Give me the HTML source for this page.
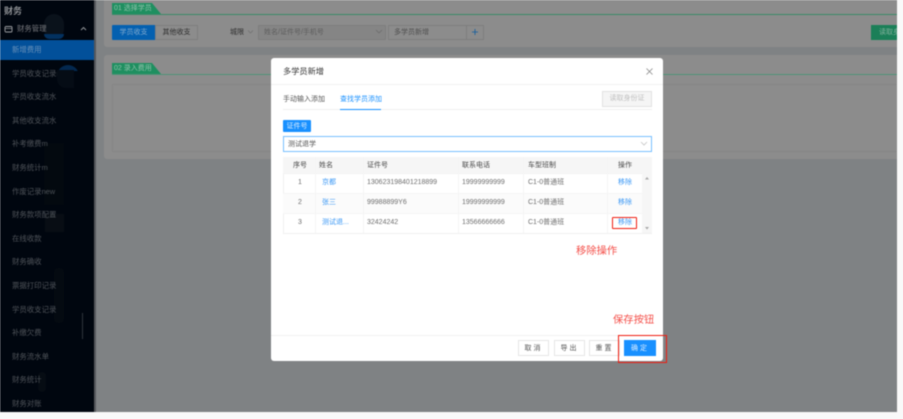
<!DOCTYPE html>
<html lang="zh">
<head>
<meta charset="utf-8">
<style>
*{box-sizing:border-box;margin:0;padding:0}
html,body{width:903px;height:419px;overflow:hidden;background:#f9f9f9}
body{font-family:"Liberation Sans","Noto Sans CJK SC",sans-serif;position:relative}
#wrap{position:absolute;left:0;top:0;width:903px;height:419px;filter:blur(.5px)}
.a{position:absolute;white-space:nowrap}
#page{position:absolute;left:0;top:0;width:897px;height:412px;background:#7f8284;overflow:hidden}
#side{position:absolute;left:0;top:0;width:94px;height:412px;background:#00060f}
.mi{position:absolute;left:12px;font-size:7.4px;line-height:12px;color:#4e5359;white-space:nowrap;width:45px;overflow:hidden}
.card{position:absolute;left:104px;width:800px;background:#8c8c8c;border-radius:3px}
.tabg{position:absolute;height:11px;width:49px;background:#1f8f60;clip-path:polygon(0 0,40px 0,49px 100%,0 100%);color:#8fc0aa;font-size:7px;line-height:11px;padding-left:2px;white-space:nowrap}
.line{position:absolute;height:1px;background:#3a8a68}
#modal{position:absolute;left:271px;top:58px;width:392px;height:303px;background:#fff;border-radius:3px}
.cell{position:absolute;font-size:7px;line-height:12px;color:#6e6e6e;white-space:nowrap}
.hd{color:#4a4a4a}
.lk{color:#3b98f5}
.b{position:absolute;top:340px;height:16px;width:31px;background:#fff;border:1px solid #e6e6e6;font-size:7px;line-height:16px;text-align:center;color:#555;letter-spacing:2px}
</style>
</head>
<body>
<div id="wrap">
<div id="page">
  <div class="card" style="top:-4px;height:51px"></div>
  <div class="card" style="top:55px;height:104px"></div>

  <div class="tabg" style="left:112px;top:3px">01 选择学员</div>
  <div class="line" style="left:112px;top:14px;width:785px"></div>
  <div class="a" style="left:112px;top:25px;width:43px;height:15px;background:#0460b0;color:#7fa9cf;font-size:7px;line-height:16px;text-align:center;border-radius:1px 0 0 1px">学员收支</div>
  <div class="a" style="left:155px;top:25px;width:43px;height:15px;background:#8c8c8c;border:1px solid #7e7e7e;color:#2e2e2e;font-size:7px;line-height:14px;text-align:center">其他收支</div>
  <div class="a" style="left:230px;top:27px;font-size:7px;line-height:12px;color:#2f2f2f">城限</div>
  <svg class="a" style="left:247px;top:29px" width="7" height="6"><path d="M1 1.5L3.5 4L6 1.5" fill="none" stroke="#6f6f6f" stroke-width=".7"/></svg>
  <div class="a" style="left:258px;top:25px;width:128px;height:15px;border:1px solid #7e7e7e;background:#858585;color:#5d5d5d;font-size:7px;line-height:14px;padding-left:5px">姓名/证件号/手机号</div>
  <svg class="a" style="left:375px;top:29px" width="8" height="6"><path d="M1 1L4 4L7 1" fill="none" stroke="#6a6a6a" stroke-width=".7"/></svg>
  <div class="a" style="left:388px;top:25px;width:79px;height:15px;border:1px solid #7e7e7e;color:#4f4f4f;font-size:7px;line-height:14px;padding-left:5px">多学员新增</div>
  <div class="a" style="left:466px;top:25px;width:18px;height:15px;border:1px solid #7e7e7e"></div>
  <svg class="a" style="left:471px;top:28px" width="8" height="8"><path d="M4 1V7M1 4H7" fill="none" stroke="#0f5c9e" stroke-width=".8"/></svg>
  <div class="a" style="left:871px;top:25px;width:26px;height:15px;background:#1b7f58;color:#80b09b;font-size:7px;line-height:16px;padding-left:8px;overflow:hidden">读取身份证</div>

  <div class="tabg" style="left:112px;top:63px">02 录入费用</div>
  <div class="line" style="left:112px;top:74px;width:785px;background:#4f9377"></div>
  <div class="a" style="left:112px;top:84px;width:790px;height:68px;border:1px solid #868686"></div>

  <div id="side">
    <div class="a" style="left:44px;top:14px;width:20px;height:25px;background:#0a121b;border-radius:10px"></div>
    <div class="a" style="left:44px;top:34px;width:20px;height:5px;background:#03315f;border-radius:0 0 10px 10px"></div>
    <div class="a" style="left:57px;top:65px;width:22px;height:22px;background:#03284f;border-radius:11px 11px 0 0;clip-path:inset(0 0 16px 0)"></div>
    <div class="a" style="left:57px;top:70px;width:17px;height:18px;background:#050c15;border-radius:0 0 0 9px"></div>
    <div class="a" style="left:44px;top:143px;width:20px;height:62px;background:#03090f"></div>
    <div class="a" style="left:45px;top:214px;width:19px;height:18px;background:#080d14"></div>
    <div class="a" style="left:54px;top:268px;width:10px;height:55px;background:#040a11;border-radius:4px"></div>
    <div class="a" style="left:82px;top:313px;width:1px;height:26px;background:#2e343b"></div>
    <div class="a" style="left:38px;top:372px;width:8px;height:20px;background:#060c13;border-radius:4px"></div>

    <div class="a" style="left:4px;top:3px;font-size:9px;line-height:16px;color:#8d9094;font-weight:700">财务</div>
    <svg class="a" style="left:4px;top:25px" width="9" height="8"><rect x="1" y="1.5" width="7" height="5.5" rx="1" fill="none" stroke="#9a9da0" stroke-width=".9"/><path d="M1 3.5H8" stroke="#9a9da0" stroke-width=".7"/></svg>
    <div class="a" style="left:17px;top:24px;font-size:7.4px;line-height:10px;color:#76787d">财务管理</div>
    <svg class="a" style="left:80px;top:26px" width="7" height="5"><path d="M1 4L3.5 1.5L6 4" fill="none" stroke="#9a9da0" stroke-width=".9"/></svg>
    <div class="a" style="left:0;top:40px;width:94px;height:20px;background:#02509a"></div>
    <div class="mi" style="top:44px;color:#6a92ba">新增费用</div>
    <div class="mi" style="top:68px">学员收支记录m</div>
    <div class="mi" style="top:91px">学员收支流水</div>
    <div class="mi" style="top:115px">其他收支流水</div>
    <div class="mi" style="top:138px">补考缴费m</div>
    <div class="mi" style="top:162px">财务统计m</div>
    <div class="mi" style="top:186px">作废记录new</div>
    <div class="mi" style="top:209px">财务款项配置</div>
    <div class="mi" style="top:233px">在线收款</div>
    <div class="mi" style="top:256px">财务确收</div>
    <div class="mi" style="top:280px">票据打印记录</div>
    <div class="mi" style="top:304px">学员收支记录</div>
    <div class="mi" style="top:327px">补缴欠费</div>
    <div class="mi" style="top:351px">财务流水单</div>
    <div class="mi" style="top:374px">财务统计</div>
    <div class="mi" style="top:398px">财务对账</div>
  </div>
  <div class="a" style="left:94px;top:0;width:2px;height:412px;background:#55585b"></div>

  <div id="modal"></div>
  <div class="a" style="left:283px;top:65px;font-size:8.2px;line-height:14px;color:#333">多学员新增</div>
  <svg class="a" style="left:645px;top:67px" width="9" height="9"><path d="M1.5 1.5L7.5 7.5M7.5 1.5L1.5 7.5" fill="none" stroke="#888" stroke-width=".8"/></svg>
  <div class="a" style="left:271px;top:84px;width:392px;height:1px;background:#f1f1f1"></div>

  <div class="a" style="left:283px;top:94px;font-size:7px;line-height:12px;color:#555">手动输入添加</div>
  <div class="a" style="left:340px;top:94px;font-size:7px;line-height:12px;color:#1890ff">查找学员添加</div>
  <div class="a" style="left:283px;top:109px;width:369px;height:1px;background:#f0f0f0"></div>
  <div class="a" style="left:340px;top:108.5px;width:41px;height:1.5px;background:#1890ff"></div>
  <div class="a" style="left:602px;top:91px;width:50px;height:16px;background:#f5f5f5;border:1px solid #e2e2e2;font-size:7px;line-height:14px;text-align:center;color:#c0c0c0">读取身份证</div>

  <div class="a" style="left:283px;top:120px;width:28px;height:12px;background:#1890ff;border-radius:1px;font-size:7px;line-height:14px;text-align:center;color:#d9ecff">证件号</div>
  <div class="a" style="left:283px;top:136px;width:369px;height:16px;border:1px solid #78bfff;background:#fff;font-size:7px;line-height:15px;color:#555;padding-left:4px">测试退学</div>
  <svg class="a" style="left:640px;top:141px" width="8" height="6"><path d="M1 1L4 4L7 1" fill="none" stroke="#c4c4c4" stroke-width=".8"/></svg>

  <!-- table -->
  <div class="a" style="left:283px;top:157px;width:369px;height:77px;background:#fff;border:1px solid #f0f0f0"></div>
  <div class="a" style="left:283px;top:157px;width:369px;height:16px;background:#f6f6f6"></div>
  <div class="a" style="left:283px;top:193px;width:359px;height:20px;background:#fbfbfb"></div>
  <div class="a" style="left:283px;top:173px;width:369px;height:1px;background:#f2f2f2"></div>
  <div class="a" style="left:283px;top:193px;width:359px;height:1px;background:#f5f5f5"></div>
  <div class="a" style="left:283px;top:213px;width:359px;height:1px;background:#f5f5f5"></div>
  <div class="a" style="left:315px;top:157px;width:1px;height:76px;background:#f5f5f5"></div>
  <div class="a" style="left:363px;top:157px;width:1px;height:76px;background:#f5f5f5"></div>
  <div class="a" style="left:458px;top:157px;width:1px;height:76px;background:#f5f5f5"></div>
  <div class="a" style="left:523px;top:157px;width:1px;height:76px;background:#f5f5f5"></div>
  <div class="a" style="left:607px;top:157px;width:1px;height:76px;background:#f5f5f5"></div>
  <div class="a" style="left:642px;top:173px;width:10px;height:60px;background:#f6f6f6"></div>
  <svg class="a" style="left:644px;top:176px" width="6" height="54"><path d="M1 3.5L3 1L5 3.5Z" fill="#a8a8a8"/><path d="M1 51L3 53.5L5 51Z" fill="#a8a8a8"/></svg>

  <div class="cell hd" style="left:293px;top:160px">序号</div>
  <div class="cell hd" style="left:319px;top:160px">姓名</div>
  <div class="cell hd" style="left:367px;top:160px">证件号</div>
  <div class="cell hd" style="left:462px;top:160px">联系电话</div>
  <div class="cell hd" style="left:528px;top:160px">车型班制</div>
  <div class="cell hd" style="left:618px;top:160px">操作</div>

  <div class="cell" style="left:298px;top:177px">1</div>
  <div class="cell lk" style="left:322px;top:177px">京都</div>
  <div class="cell" style="left:367px;top:177px">130623198401218899</div>
  <div class="cell" style="left:462px;top:177px">19999999999</div>
  <div class="cell" style="left:528px;top:177px">C1-0普通班</div>
  <div class="cell lk" style="left:618px;top:177px">移除</div>

  <div class="cell" style="left:298px;top:197px">2</div>
  <div class="cell lk" style="left:322px;top:197px">张三</div>
  <div class="cell" style="left:367px;top:197px">99988899Y6</div>
  <div class="cell" style="left:462px;top:197px">19999999999</div>
  <div class="cell" style="left:528px;top:197px">C1-0普通班</div>
  <div class="cell lk" style="left:618px;top:197px">移除</div>

  <div class="cell" style="left:298px;top:217px">3</div>
  <div class="cell lk" style="left:322px;top:217px">测试退...</div>
  <div class="cell" style="left:367px;top:217px">32424242</div>
  <div class="cell" style="left:462px;top:217px">13566666666</div>
  <div class="cell" style="left:528px;top:217px">C1-0普通班</div>
  <div class="cell lk" style="left:618px;top:217px">移除</div>
  <div class="a" style="left:612px;top:217px;width:25px;height:12px;border:1.2px solid #f01c10;border-radius:1px"></div>

  <div class="a" style="left:576px;top:243px;font-size:10.3px;line-height:17px;color:#f4504a">移除操作</div>
  <div class="a" style="left:613px;top:312px;font-size:10.3px;line-height:17px;color:#f4504a">保存按钮</div>

  <div class="a" style="left:271px;top:335px;width:392px;height:1px;background:#f1f1f1"></div>
  <div class="b" style="left:518px">取消</div>
  <div class="b" style="left:554px">导出</div>
  <div class="b" style="left:589px">重置</div>
  <div class="b" style="left:624px;width:32px;background:#1890ff;border-color:#1890ff;color:#d9ecff">确定</div>
  <div class="a" style="left:618px;top:335px;width:49px;height:28px;border:1.3px solid #f01c10"></div>
</div>
</div>
</body>
</html>
